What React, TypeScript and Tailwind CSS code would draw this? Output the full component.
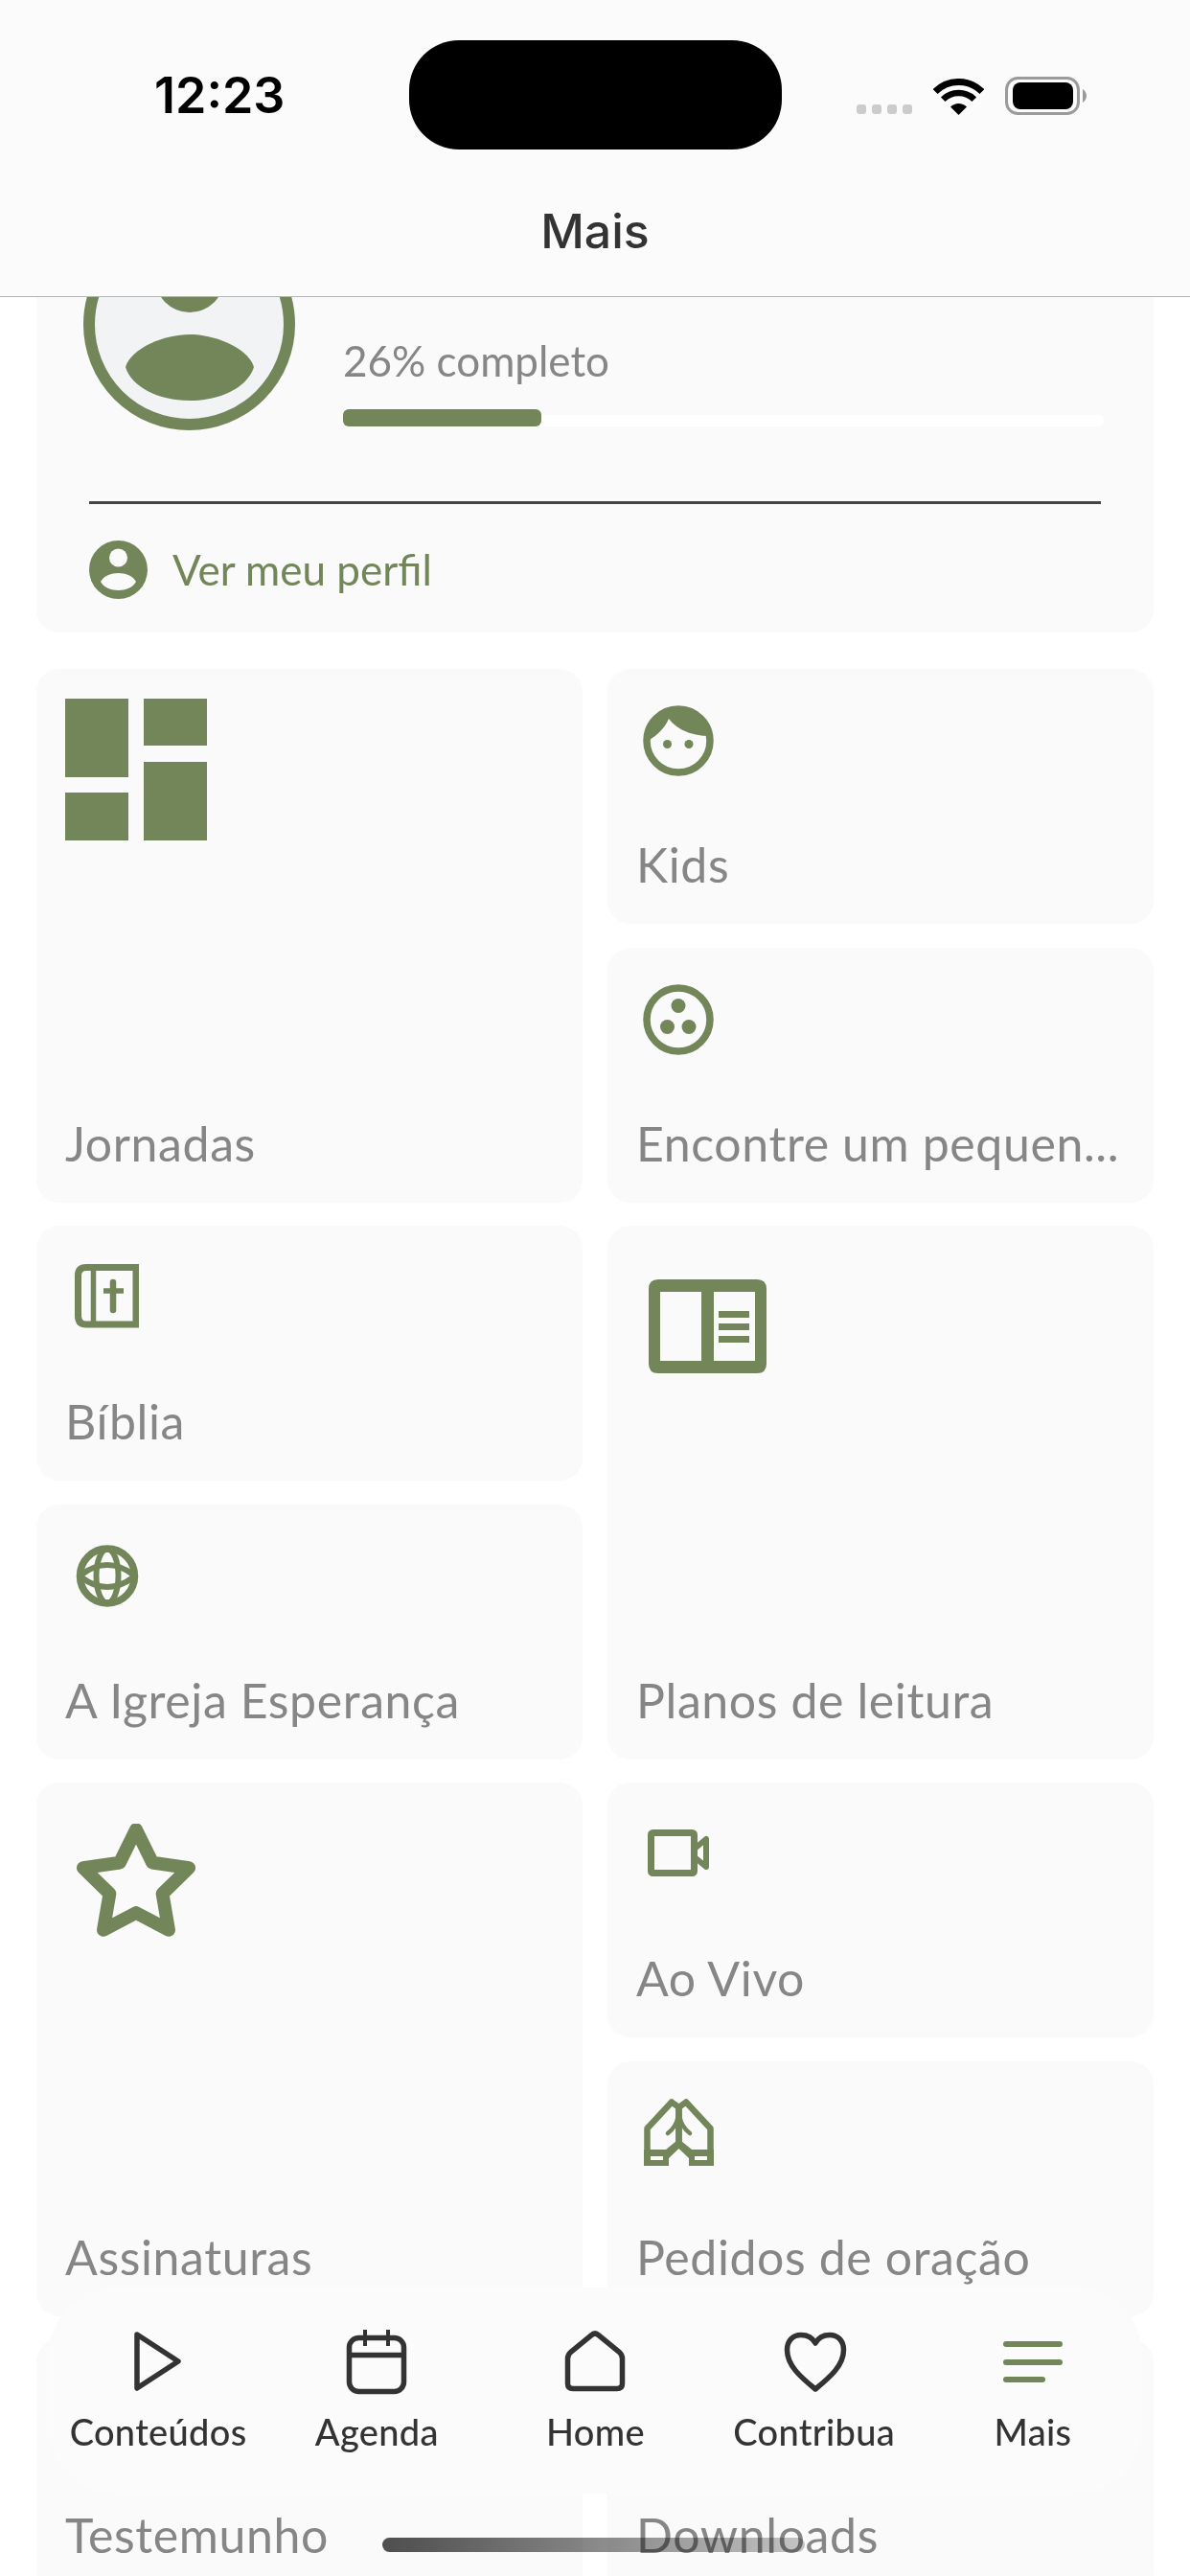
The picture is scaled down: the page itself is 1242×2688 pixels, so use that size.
import React from "react";

const G = "#728659";
const D = "#333333";

const Dashboard = () => (
  <svg width="148" height="148" viewBox="0 0 148 148" fill={G}>
    <rect x="0" y="0" width="66" height="82" />
    <rect x="0" y="98" width="66" height="50" />
    <rect x="82" y="0" width="66" height="49" />
    <rect x="82" y="66" width="66" height="82" />
  </svg>
);
const Face = () => (
  <svg width="74" height="74" viewBox="0 0 74 74">
    <circle cx="37" cy="37" r="33" fill="none" stroke={G} strokeWidth="7.5" />
    <path d="M5 37 C 5 18 20 3 37 3 C 54 3 70 16 70 32 C 52 32 36 26 27 14 C 23 24 14 32 5 37Z" fill={G} />
    <circle cx="25.5" cy="40.5" r="4.5" fill={G} />
    <circle cx="48" cy="40.5" r="4.5" fill={G} />
  </svg>
);
const Group = () => (
  <svg width="74" height="74" viewBox="0 0 74 74" fill={G}>
    <circle cx="37" cy="37" r="33" fill="none" stroke={G} strokeWidth="7.5" />
    <circle cx="37" cy="22.5" r="7.5" />
    <circle cx="25.5" cy="44.5" r="7.5" />
    <circle cx="48" cy="44.5" r="7.5" />
  </svg>
);
const Bible = () => (
  <svg width="67" height="67" viewBox="0 0 67 67" fill="none" stroke={G}>
    <path d="M64 3.5 H12 Q3.5 3.5 3.5 12 V54 Q3.5 63 12 63 H64 Z" strokeWidth="7" />
    <path d="M19.5 4 V63" strokeWidth="5.5" />
    <path d="M40 19 V48" strokeWidth="6.5" strokeLinecap="round" />
    <path d="M30 28 H51" strokeWidth="5.5" />
  </svg>
);
const BookOpen = () => (
  <svg width="123" height="98" viewBox="0 0 123 98" fill={G}>
    <path fillRule="evenodd" d="M10 0 H113 Q123 0 123 10 V88 Q123 98 113 98 H10 Q0 98 0 88 V10 Q0 0 10 0 Z M12 13 V85 H55 V13 Z M68 13 V85 H111 V13 Z" />
    <rect x="73" y="33" width="32" height="7" />
    <rect x="73" y="46" width="32" height="7" />
    <rect x="73" y="59" width="32" height="7" />
  </svg>
);
const Globe = () => (
  <svg width="66" height="66" viewBox="0 0 66 66" fill="none" stroke={G}>
    <circle cx="33" cy="32.5" r="28.5" strokeWidth="7.5" />
    <ellipse cx="33" cy="32.5" rx="11.5" ry="28" strokeWidth="6" />
    <path d="M6 31 Q33 11 60 31 M6 34 Q33 54 60 34" strokeWidth="6" />
  </svg>
);
const Star = () => (
  <svg width="124" height="118" viewBox="0.8 0.9 22.4 21.4" fill="none" stroke={G} strokeWidth="2.5" strokeLinejoin="round">
    <polygon points="12 2 15.09 8.26 22 9.27 17 14.14 18.18 21.02 12 17.77 5.82 21.02 7 14.14 2 9.27 8.91 8.26 12 2" />
  </svg>
);
const Video = () => (
  <svg width="64" height="49" viewBox="0 0 64 49" fill="none" stroke={G} strokeLinejoin="round">
    <rect x="3.5" y="3.5" width="45" height="42" rx="2" strokeWidth="7" />
    <path d="M49 20 L61 10 V39 L49 29 Z" strokeWidth="6" />
  </svg>
);
const Pray = () => (
  <svg width="73" height="73" viewBox="0 0 73 73" fill="none" stroke={G} strokeLinejoin="round">
    <path d="M3.5 60 V32 L29 4.5 L36.5 10 V48" strokeWidth="6.5" />
    <path d="M69.5 60 V32 L44 4.5 L36.5 10 V48" strokeWidth="6.5" />
    <path d="M35.5 20 Q34 30 25 37 M37.5 20 Q39 30 48 37" strokeWidth="4.5" strokeLinecap="round" />
    <path fillRule="evenodd" stroke="none" fill={G} d="M0 54 H23 L36.5 43 L50 54 H73 V71 H47 V63 L36.5 53 L26 63 V71 H0 Z M7 61 V65 H20 V61 Z M53 61 V65 H66 V61 Z" />
  </svg>
);

const Play = () => (
  <svg width="70" height="70" viewBox="0 0 70 70" fill="none" stroke={D} strokeWidth="5.5" strokeLinejoin="round">
    <path d="M13 6 L56 34 L13 62 Z" />
  </svg>
);
const Calendar = () => (
  <svg width="70" height="70" viewBox="0 0 70 70" fill="none" stroke={D}>
    <rect x="6.5" y="9.5" width="57" height="56" rx="10" strokeWidth="5.5" />
    <path d="M6.5 27.5 H63.5" strokeWidth="5.5" />
    <path d="M23 1 V18 M47 1 V18" strokeWidth="4" />
  </svg>
);
const Home = () => (
  <svg width="70" height="70" viewBox="0 0 70 70" fill="none" stroke={D} strokeWidth="5.5">
    <path d="M31 7 Q35 3 39 7 L60 24 Q63.5 27 63.5 31 V57 Q63.5 62.5 58 62.5 H12 Q6.5 62.5 6.5 57 V31 Q6.5 27 10 24 Z" />
  </svg>
);
const Heart = () => (
  <svg width="70" height="70" viewBox="0 0 70 70" fill="none" stroke={D} strokeWidth="5.5" strokeLinejoin="round">
    <path d="M36 63 C 20 50 6.5 38 6.5 22 C6.5 12 13 6.5 21 6.5 C 27 6.5 33 9.5 36 15 C 39 9.5 45 6.5 51 6.5 C59 6.5 65.5 12 65.5 22 C65.5 38 52 50 36 63Z" />
  </svg>
);
const Menu = () => (
  <svg width="70" height="70" viewBox="0 0 70 70" fill={G}>
    <rect x="4" y="13" width="62" height="6" rx="3" />
    <rect x="4" y="32" width="62" height="6" rx="3" />
    <rect x="4" y="50" width="44" height="6" rx="3" />
  </svg>
);

function Card({ label, tall, icon, iconClass }: { label: string; tall?: boolean; icon: React.ReactNode; iconClass: string }) {
  return (
    <div className={`${tall ? "row-span-2" : ""} bg-[#fafafa] rounded-[24px] flex flex-col justify-between pl-[30px] pr-[20px] pb-[32px] min-w-0`}>
      <div className={iconClass}>{icon}</div>
      <div className="text-[50px] leading-[60px] tracking-[0.6px] text-[#868686] font-['Lato',sans-serif] whitespace-nowrap">{label}</div>
    </div>
  );
}

function NavItem({ icon, label }: { icon: React.ReactNode; label: string }) {
  return (
    <div className="flex flex-col items-center">
      {icon}
      <div className="mt-[15px] text-[38px] leading-[44px] tracking-[0.3px] text-[#333333] font-medium font-['Lato',sans-serif] whitespace-nowrap">{label}</div>
    </div>
  );
}

export default function App() {
  return (
    <div className="relative w-[1242px] h-[2688px] overflow-hidden bg-white flex flex-col font-['Lato',sans-serif]">
      <header className="relative z-10 h-[310px] shrink-0 bg-[#fbfbfb] border-b border-[#b5b5b5]">
        <div className="flex items-start justify-between pl-[161px] pr-[108px] pt-[70px]">
          <div className="text-[52px] leading-[60px] font-semibold text-black font-['Inter',sans-serif]">12:23</div>
          <div className="flex items-end pt-[10px]">
            <div className="flex gap-[6px] pb-[1px]">
              <span className="w-[10px] h-[10px] rounded-[3px] bg-[#cccccc]" />
              <span className="w-[10px] h-[10px] rounded-[3px] bg-[#cccccc]" />
              <span className="w-[10px] h-[10px] rounded-[3px] bg-[#cccccc]" />
              <span className="w-[10px] h-[10px] rounded-[3px] bg-[#cccccc]" />
            </div>
            <svg className="ml-[22px]" width="53" height="38" viewBox="0 0 53 38" fill="none" stroke="#000">
              <path d="M2.1 13.6 A34.5 34.5 0 0 1 50.9 13.6" strokeWidth="7" />
              <path d="M10.24 21.74 A23 23 0 0 1 42.76 21.74" strokeWidth="6.5" />
              <path d="M26.5 38 L18 29.5 A12 12 0 0 1 35 29.5 Z" fill="#000" stroke="none" />
            </svg>
            <svg className="ml-[22px]" width="85" height="40" viewBox="0 0 85 40">
              <rect x="1.5" y="1.5" width="75" height="37" rx="12" fill="none" stroke="#9a9a9a" strokeWidth="3" />
              <rect x="8" y="6" width="63" height="28" rx="8" fill="#000" />
              <path d="M81 13 Q85 16 85 20 Q85 24 81 27 Z" fill="#9a9a9a" />
            </svg>
          </div>
        </div>
        <div className="absolute left-[427px] top-[42px] w-[389px] h-[114px] bg-black rounded-[52px]" />
        <div className="absolute inset-x-0 top-[211px] text-center text-[50px] leading-[60px] font-medium text-[#333333] font-['Inter',sans-serif]">Mais</div>
      </header>

      <main className="flex-1 min-h-0 overflow-hidden px-[38px]">
        <section className="relative -mt-[82px] h-[432px] bg-[#fafafa] rounded-[24px] pl-[49px] pr-[52px]">
          <div className="flex">
            <svg width="221" height="221" viewBox="0 0 221 221" className="shrink-0">
              <circle cx="110.5" cy="110.5" r="104.5" fill="#f1f3f5" stroke={G} strokeWidth="12" />
              <circle cx="111" cy="62" r="36" fill={G} />
              <path d="M44 155 C 50 135, 85 121, 111 121 C 137 121, 172 135, 178 155 C 172 175, 145 190, 111 190 C 77 190, 50 175, 44 155Z" fill={G} />
            </svg>
            <div className="flex-1 ml-[50px] pt-[121px]">
              <div className="text-[44px] leading-[54px] text-[#868686]">26% completo</div>
              <div className="relative mt-[24px] h-[18px]">
                <div className="absolute inset-x-0 bottom-0 h-[12px] rounded-full bg-white" />
                <div className="absolute left-0 top-0 h-[18px] w-[207px] rounded-[6px] bg-[#728659]" />
              </div>
            </div>
          </div>
          <div className="mt-[74px] ml-[6px] mr-[3px] h-[2.5px] bg-[#444444]" />
          <div className="flex items-center ml-[6px] mt-[38px]">
            <svg width="61" height="61" viewBox="0 0 61 61" fill={G}>
              <circle cx="30.5" cy="30.5" r="30.5" />
              <circle cx="30.5" cy="18" r="9.5" fill="#fafafa" />
              <path d="M12 43 C 15 37 23 34 30.5 34 C 38 34 46 37 49 43 C 46 49 38 52 30.5 52 C 23 52 15 49 12 43Z" fill="#fafafa" />
            </svg>
            <div className="ml-[26px] text-[44px] leading-[52px] text-[#728659]">Ver meu perfil</div>
          </div>
        </section>

        <section className="mt-[38px] grid grid-cols-2 gap-x-[26px] gap-y-[24.5px] auto-rows-[266px]">
          <Card tall label="Jornadas" icon={<Dashboard />} iconClass="mt-[31px]" />
          <Card label="Kids" icon={<Face />} iconClass="mt-[38px] ml-[7px]" />
          <Card label="Encontre um pequen..." icon={<Group />} iconClass="mt-[38px] ml-[7px]" />
          <Card label="Bíblia" icon={<Bible />} iconClass="mt-[40px] ml-[10px]" />
          <Card tall label="Planos de leitura" icon={<BookOpen />} iconClass="mt-[56px] ml-[13px]" />
          <Card label="A Igreja Esperança" icon={<Globe />} iconClass="mt-[42px] ml-[11px]" />
          <Card tall label="Assinaturas" icon={<Star />} iconClass="mt-[43px] ml-[12px]" />
          <Card label="Ao Vivo" icon={<Video />} iconClass="mt-[49px] ml-[12px]" />
          <Card label="Pedidos de oração" icon={<Pray />} iconClass="mt-[38px] ml-[8px]" />
          <Card label="Testemunho" icon={<div className="h-[70px]" />} iconClass="mt-[38px]" />
          <Card label="Downloads" icon={<div className="h-[70px]" />} iconClass="mt-[38px]" />
        </section>
      </main>

      <nav className="absolute left-[51px] top-[2387px] w-[1141px] h-[215px] rounded-[70px] bg-[#fbfbfb] grid grid-cols-5 pt-[43px]">
        <NavItem icon={<Play />} label="Conteúdos" />
        <NavItem icon={<Calendar />} label="Agenda" />
        <NavItem icon={<Home />} label="Home" />
        <NavItem icon={<Heart />} label="Contribua" />
        <NavItem icon={<Menu />} label="Mais" />
      </nav>

      <div className="absolute left-[399px] top-[2648px] w-[441px] h-[15px] rounded-full bg-gradient-to-r from-[#4f4f4f] to-[#c8c8c8] mix-blend-multiply" />
    </div>
  );
}
